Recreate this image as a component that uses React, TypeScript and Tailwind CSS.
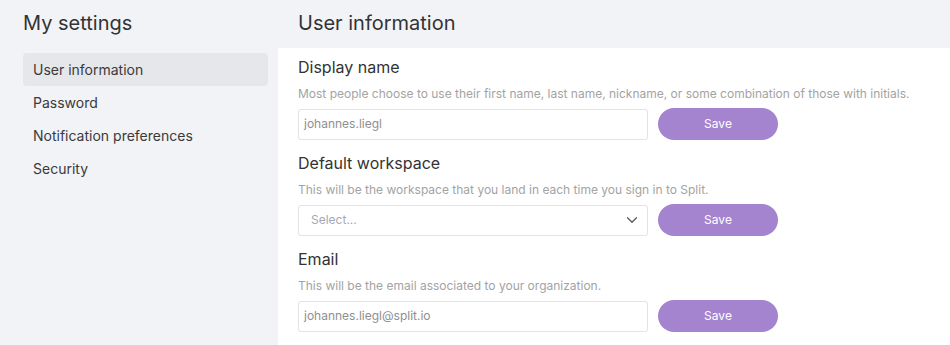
import { ChevronDown } from "lucide-react";

const sections = [
  {
    title: "Display name",
    help: "Most people choose to use their first name, last name, nickname, or some combination of those with initials.",
    value: "johannes.liegl",
  },
  {
    title: "Default workspace",
    help: "This will be the workspace that you land in each time you sign in to Split.",
    select: true,
  },
  {
    title: "Email",
    help: "This will be the email associated to your organization.",
    value: "johannes.liegl@split.io",
  },
];

const navItems = ["User information", "Password", "Notification preferences", "Security"];

export default function App() {
  return (
    <div className="flex h-[345px] w-[950px] overflow-hidden bg-[#f2f3f7] font-['Inter',sans-serif] text-[#2c2c2c]">
      <aside className="w-[278px] shrink-0 px-[23px] pt-[9px]">
        <h1 className="text-[20px] leading-[28px] text-[#333]">My settings</h1>
        <nav className="mt-[16px] flex w-[245px] flex-col">
          {navItems.map((item, i) => (
            <div
              key={item}
              className={`flex h-[33px] items-center rounded-[4px] px-[10px] text-[14px] text-[#3a3a3a] ${
                i === 0 ? "bg-[#e6e7eb]" : ""
              }`}
            >
              {item}
            </div>
          ))}
        </nav>
      </aside>
      <main className="flex min-w-0 flex-1 flex-col">
        <div className="flex h-[48px] items-center px-[20px] pb-[3px]">
          <h2 className="text-[20px] text-[#333]">User information</h2>
        </div>
        <div className="flex-1 bg-white px-[20px] pt-[8px]">
          {sections.map((s) => (
            <section key={s.title} className="h-[96px]">
              <h3 className="text-[16px] leading-[22px] text-[#333]">{s.title}</h3>
              <p className="mt-[8px] text-[12px] leading-[16px] text-[#a3a3a3]">{s.help}</p>
              <div className="mt-[6px] flex items-center gap-[10px]">
                {s.select ? (
                  <div className="flex h-[31px] w-[350px] items-center justify-between rounded-[3px] border border-[#e3e3e6] pl-[12px] pr-[6px] text-[12px] text-[#a4a9b8]">
                    <span>Select...</span>
                    <ChevronDown className="h-[18px] w-[18px] text-[#555]" strokeWidth={1.6} />
                  </div>
                ) : (
                  <div className="flex h-[31px] w-[350px] items-center rounded-[3px] border border-[#e3e3e6] px-[5px] text-[12px] text-[#8f8f8f]">
                    {s.value}
                  </div>
                )}
                <button className="h-[32px] w-[120px] rounded-full bg-[#a584cf] text-[12px] text-white">
                  Save
                </button>
              </div>
            </section>
          ))}
        </div>
      </main>
    </div>
  );
}
